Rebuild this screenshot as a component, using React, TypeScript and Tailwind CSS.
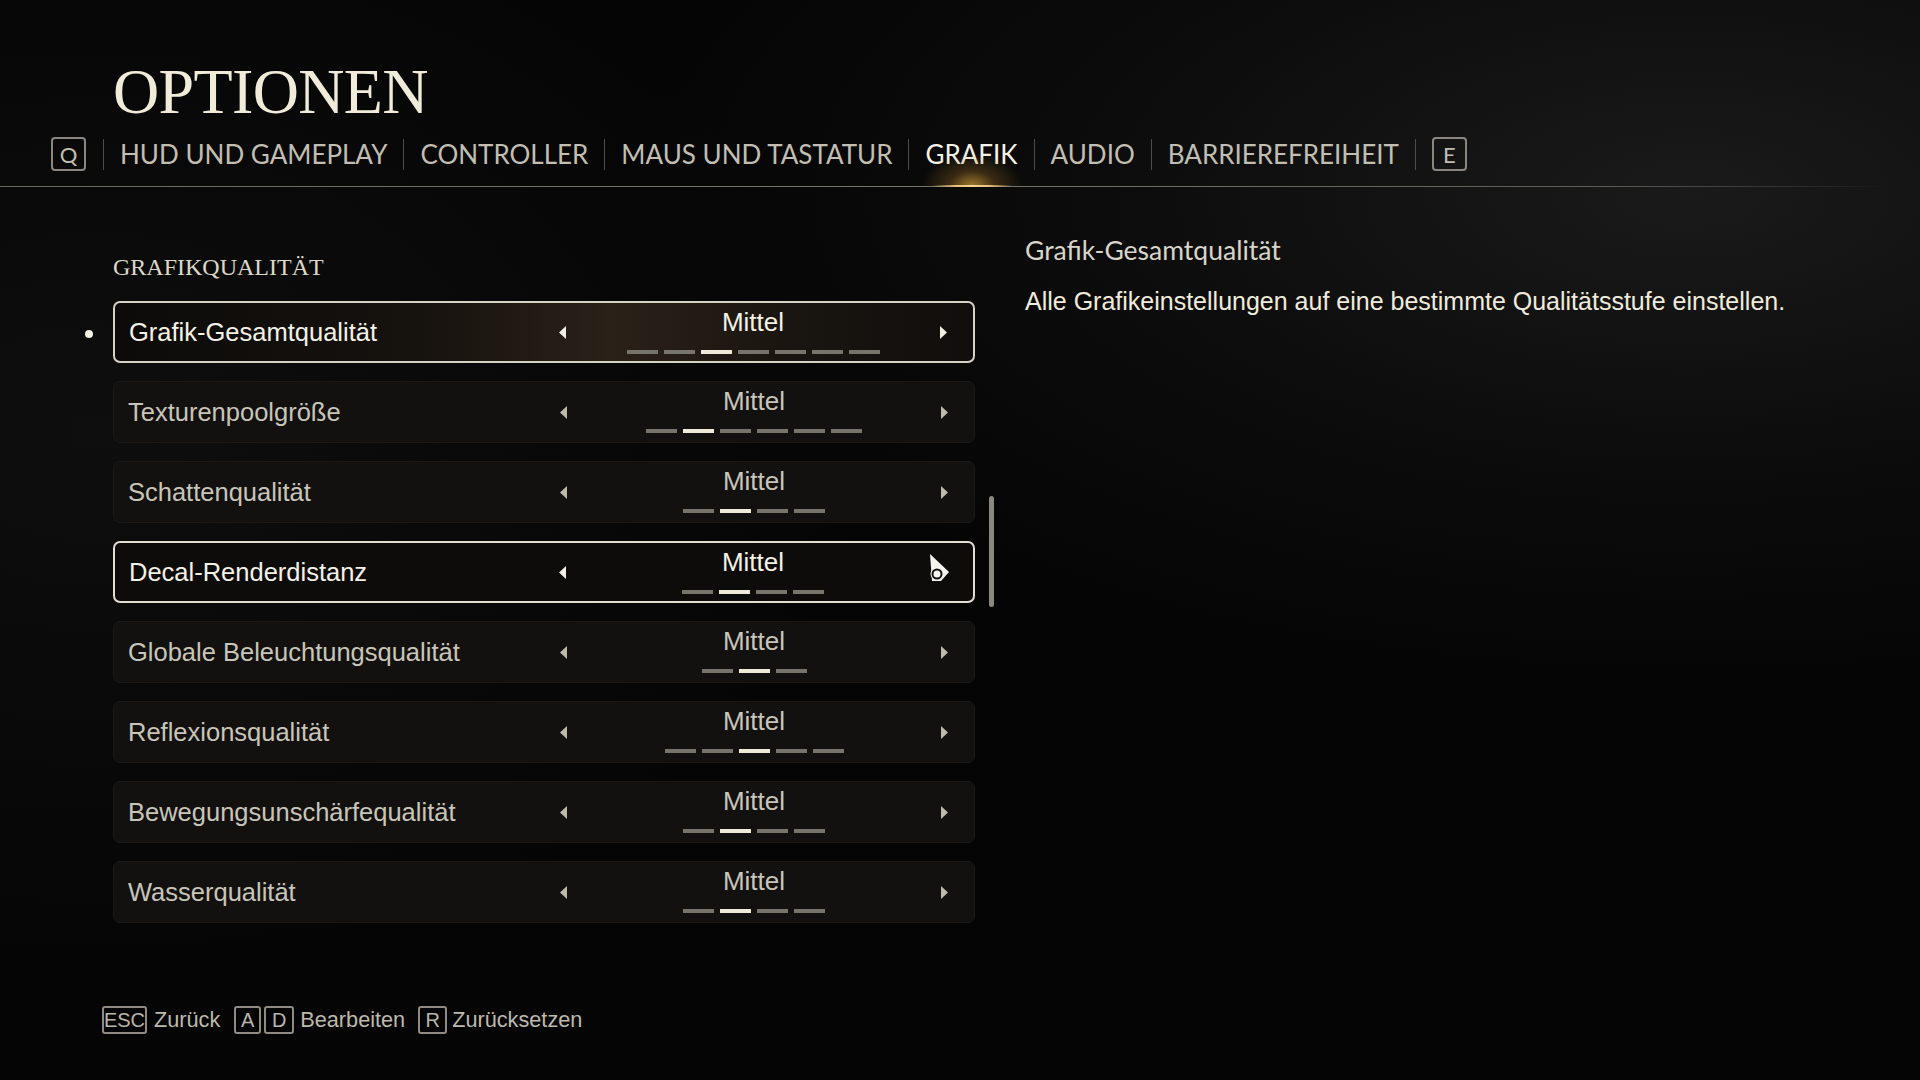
import React from 'react'

const TABS = ['HUD UND GAMEPLAY', 'CONTROLLER', 'MAUS UND TASTATUR', 'GRAFIK', 'AUDIO', 'BARRIEREFREIHEIT']

const ROWS = [
  { label: 'Grafik-Gesamtqualität', steps: 7, active: 2, state: 'selected' },
  { label: 'Texturenpoolgröße', steps: 6, active: 1, state: 'idle' },
  { label: 'Schattenqualität', steps: 4, active: 1, state: 'idle' },
  { label: 'Decal-Renderdistanz', steps: 4, active: 1, state: 'hover' },
  { label: 'Globale Beleuchtungsqualität', steps: 3, active: 1, state: 'idle' },
  { label: 'Reflexionsqualität', steps: 5, active: 2, state: 'idle' },
  { label: 'Bewegungsunschärfequalität', steps: 4, active: 1, state: 'idle' },
  { label: 'Wasserqualität', steps: 4, active: 1, state: 'idle' },
]

const serif = "font-['Liberation_Serif',serif]"
const optima = "font-['Lato','Liberation_Sans',sans-serif]"
const body = "font-['Liberation_Sans',sans-serif]"

function KeyBox({ k, className = '' }: { k: string; className?: string }) {
  return (
    <span
      className={`flex items-center justify-center h-[34px] w-[35px] rounded-[4px] border-2 border-[#8a877f] text-[22px] text-[#c2beb2] ${optima} ${className}`}
    >
      {k}
    </span>
  )
}

function Sep() {
  return <span className="w-px h-[31px] bg-[#4e4c47] shrink-0" />
}

function Arrow({ dir, bright }: { dir: 'l' | 'r'; bright: boolean }) {
  return (
    <svg width="8" height="13" viewBox="0 0 8 13" className="shrink-0">
      <path d={dir === 'l' ? 'M7 0 L7 13 L0 6.5 Z' : 'M1 0 L1 13 L8 6.5 Z'} fill={bright ? '#f2efe4' : '#bdb9ad'} />
    </svg>
  )
}

function Row({ label, steps, active, state }: { label: string; steps: number; active: number; state: string }) {
  const bright = state !== 'idle'
  const box =
    state === 'selected'
      ? 'border-2 border-[#d6d2c4] bg-[linear-gradient(90deg,#0c0b09_0%,#16120e_35%,#2a2118_58%,#1a1510_78%,#100e0c_100%)]'
      : state === 'hover'
        ? 'border-2 border-[#e2ded2] bg-[#0d0c0b]'
        : 'border border-[#1a1917] bg-[#121110]'
  return (
    <div className={`relative flex items-center h-[62px] rounded-[7px] ${box}`}>
      {state === 'selected' && <span className="absolute -left-[30px] top-[27px] w-[8px] h-[8px] rounded-full bg-[#f4f1e6]" />}
      <span className={`flex-1 pl-[14px] text-[25.5px] ${body} ${bright ? 'text-[#f4f1e6]' : 'text-[#c9c5b9]'}`}>{label}</span>
      <div className="flex items-center justify-between w-[388px] mr-[26px] self-stretch">
        <Arrow dir="l" bright={bright} />
        <div className="flex flex-col items-center self-stretch pt-[4px]">
          <span className={`text-[26px] leading-[30px] ${body} ${bright ? 'text-[#f4f1e6]' : 'text-[#c9c5b9]'}`}>Mittel</span>
          <div className="flex gap-[6px] mt-[13px]">
            {Array.from({ length: steps }).map((_, i) => (
              <span key={i} className={`w-[31px] h-[4px] ${i === active ? 'bg-[#f0ead8]' : 'bg-[#77746c]'}`} />
            ))}
          </div>
        </div>
        <Arrow dir="r" bright={bright} />
      </div>
      {state === 'hover' && (
        <svg width="24" height="32" viewBox="0 0 24 32" className="absolute left-[813px] top-[10px]">
          <path d="M2 1 L21 19 L13 28 L4 28 Z" fill="#f6f4ee" />
          <circle cx="9" cy="21" r="6.5" fill="#f6f4ee" />
          <circle cx="9" cy="21" r="4.5" fill="none" stroke="#111" strokeWidth="2" />
        </svg>
      )}
    </div>
  )
}

function FooterKey({ k, w }: { k: string; w: string }) {
  return (
    <span className={`flex items-center justify-center h-[28px] ${w} rounded-[3px] border-2 border-[#8f8b82] text-[20px] text-[#b9b5aa] ${body}`}>
      {k}
    </span>
  )
}

export default function App() {
  return (
    <div className="relative w-[1920px] h-[1080px] overflow-hidden bg-[#050505] bg-[radial-gradient(ellipse_55%_45%_at_88%_18%,#1a1a1a_0%,#0c0c0c_55%,transparent_100%),radial-gradient(ellipse_40%_50%_at_5%_40%,#0e0e0e_0%,transparent_100%)]">
      {/* Title */}
      <h1 className={`mt-[59px] pl-[113px] h-[66px] text-[64px] leading-[66px] tracking-[-0.01em] text-[#f1ecd9] ${serif}`}>OPTIONEN</h1>

      {/* Tabs */}
      <div className="mt-[12px] pl-[51px] flex items-center h-[34px] gap-[16px]">
        <KeyBox k="Q" className="mr-[1px]" />
        {TABS.map((t) => (
          <React.Fragment key={t}>
            <Sep />
            <span
              className={`relative h-[34px] leading-[34px] text-[26px] ${optima} ${t === 'GRAFIK' ? 'text-[#f5f2e6]' : 'text-[#c2beb2]'}`}
            >
              {t}
              {t === 'GRAFIK' && (
                <>
                  <span className="absolute left-1/2 -translate-x-1/2 top-[16px] w-[100px] h-[33px] bg-[radial-gradient(ellipse_50%_100%_at_50%_100%,rgba(212,158,60,0.75)_0%,rgba(150,105,35,0.35)_45%,transparent_100%)]" />
                  <span className="absolute left-1/2 -translate-x-1/2 top-[48px] w-[80px] h-[2px] bg-[linear-gradient(90deg,transparent,#e9c278_30%,#f3d79a_50%,#e9c278_70%,transparent)]" />
                </>
              )}
            </span>
          </React.Fragment>
        ))}
        <Sep />
        <KeyBox k="E" />
      </div>
      <div className="mt-[15px] h-px w-[1890px] bg-[linear-gradient(90deg,#6a6861_0%,#77746c_50%,#5e5c56_85%,transparent_100%)]" />

      {/* Content */}
      <div className="flex">
        <div className="pl-[113px] pt-[66px] flex flex-col">
          <h2 className={`h-[28px] leading-[28px] text-[24px] text-[#ddd8c8] ${serif}`}>GRAFIKQUALITÄT</h2>
          <div className="flex gap-[14px] mt-[20px]">
            <div className="w-[862px] flex flex-col gap-[18px]">
              {ROWS.map((r) => (
                <Row key={r.label} {...r} />
              ))}
            </div>
            <div className="w-[5px] flex flex-col">
              <div className="h-[195px]" />
              <div className="h-[111px] w-[5px] rounded-full bg-[#8a877f]" />
            </div>
          </div>
          {/* Footer hints */}
          <div className={`-ml-[11px] mt-[83px] flex items-center h-[28px] text-[21.7px] text-[#bdb9ad] ${body}`}>
            <FooterKey k="ESC" w="w-[45px]" />
            <span className="ml-[7px]">Zurück</span>
            <FooterKey k="A" w="w-[27px] ml-[14px]" />
            <FooterKey k="D" w="w-[30px] ml-[3px]" />
            <span className="ml-[6px]">Bearbeiten</span>
            <FooterKey k="R" w="w-[29px] ml-[13px]" />
            <span className="ml-[5px]">Zurücksetzen</span>
          </div>
        </div>

        <div className="ml-[31px] pt-[48px] flex flex-col">
          <div className={`h-[30px] leading-[30px] text-[26.5px] text-[#d9d5c9] ${optima}`}>Grafik-Gesamtqualität</div>
          <div className={`mt-[21px] h-[30px] leading-[30px] text-[25px] text-[#f0ebdc] ${body}`}>
            Alle Grafikeinstellungen auf eine bestimmte Qualitätsstufe einstellen.
          </div>
        </div>
      </div>
    </div>
  )
}
